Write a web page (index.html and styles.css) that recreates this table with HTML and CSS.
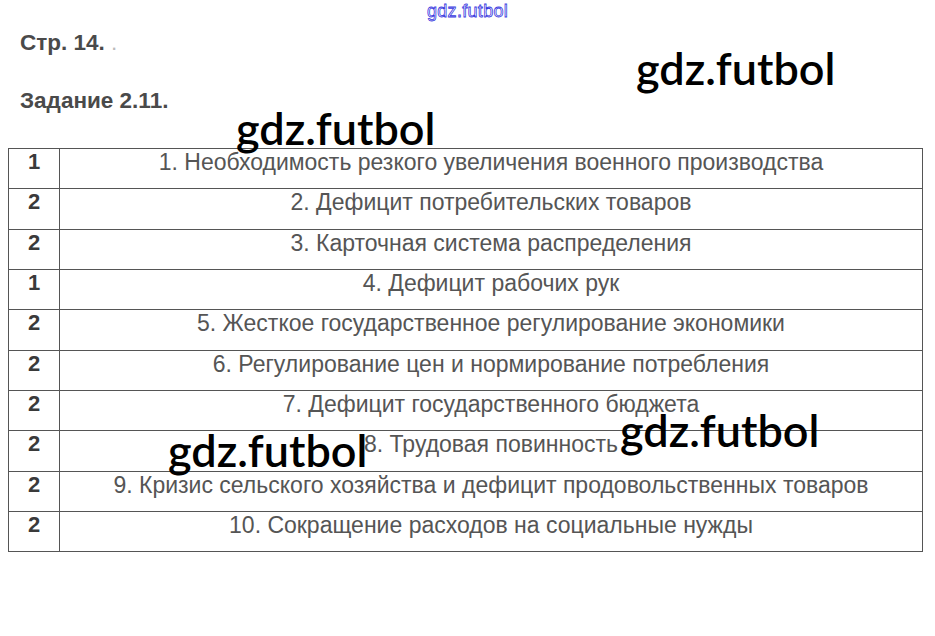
FILE: index.html
```html
<!DOCTYPE html>
<html lang="ru">
<head>
<meta charset="utf-8">
<link rel="stylesheet" href="styles.css">
</head>
<body>
<div class="page">
  <div class="top-mark">gdz.futbol</div>
  <div class="heading page-no">Стр. 14. <span class="dot">.</span></div>
  <div class="heading task">Задание 2.11.</div>
  <table class="answers">
    <tr><td class="num">1</td><td class="txt">1. Необходимость резкого увеличения военного производства</td></tr>
    <tr class="tall"><td class="num">2</td><td class="txt">2. Дефицит потребительских товаров</td></tr>
    <tr><td class="num">2</td><td class="txt">3. Карточная система распределения</td></tr>
    <tr><td class="num">1</td><td class="txt">4. Дефицит рабочих рук</td></tr>
    <tr class="tall"><td class="num">2</td><td class="txt">5. Жесткое государственное регулирование экономики</td></tr>
    <tr><td class="num">2</td><td class="txt">6. Регулирование цен и нормирование потребления</td></tr>
    <tr><td class="num">2</td><td class="txt">7. Дефицит государственного бюджета</td></tr>
    <tr class="tall"><td class="num">2</td><td class="txt">8. Трудовая повинность</td></tr>
    <tr><td class="num">2</td><td class="txt">9. Кризис сельского хозяйства и дефицит продовольственных товаров</td></tr>
    <tr><td class="num">2</td><td class="txt">10. Сокращение расходов на социальные нужды</td></tr>
  </table>
  <div class="wm wm1">gdz.futbol</div>
  <div class="wm wm2">gdz.futbol</div>
  <div class="wm wm3">gdz.futbol</div>
  <div class="wm wm4">gdz.futbol</div>
</div>
</body>
</html>
```

FILE: styles.css
```css
html, body {
  margin: 0;
  padding: 0;
  background: #fff;
}
.page {
  position: relative;
  width: 935px;
  height: 636px;
  font-family: "Liberation Sans", Arial, sans-serif;
}
.top-mark {
  position: absolute;
  left: 427px;
  top: 0px;
  font-family: "Liberation Sans", Arial, sans-serif;
  font-size: 18px;
  line-height: 22px;
  color: transparent;
  -webkit-text-stroke: 0.8px #3a3ae0;
  letter-spacing: 0.3px;
}
.heading {
  padding-left: 20px;
  font-weight: bold;
  font-size: 22.5px;
  color: #4a4a4a;
  line-height: 26px;
}
.page-no {
  padding-top: 30px;
}
.page-no .dot {
  color: #bbb;
  font-weight: normal;
}
.task {
  padding-top: 32px;
}
.answers {
  margin-left: 8px;
  margin-top: 34px;
  width: 915px;
  border-collapse: collapse;
}
.answers td {
  border: 1px solid #555;
  height: 39px;
  padding: 0;
  vertical-align: top;
  line-height: 26px;
  text-align: center;
  font-size: 23px;
}
.answers .tall td {
  height: 40px;
}
.answers .num {
  width: 50px;
  font-weight: bold;
  color: #3a3a3a;
  font-size: 22px;
}
.answers .txt {
  color: #555;
}
.wm {
  position: absolute;
  font-family: Lato, "Open Sans", sans-serif;
  font-weight: 600;
  font-size: 45px;
  color: #000;
  line-height: 1;
}
.wm1 { left: 636px; top: 46px; }
.wm2 { left: 236px; top: 106px; }
.wm3 { left: 168px; top: 428px; }
.wm4 { left: 620px; top: 408px; }
```
